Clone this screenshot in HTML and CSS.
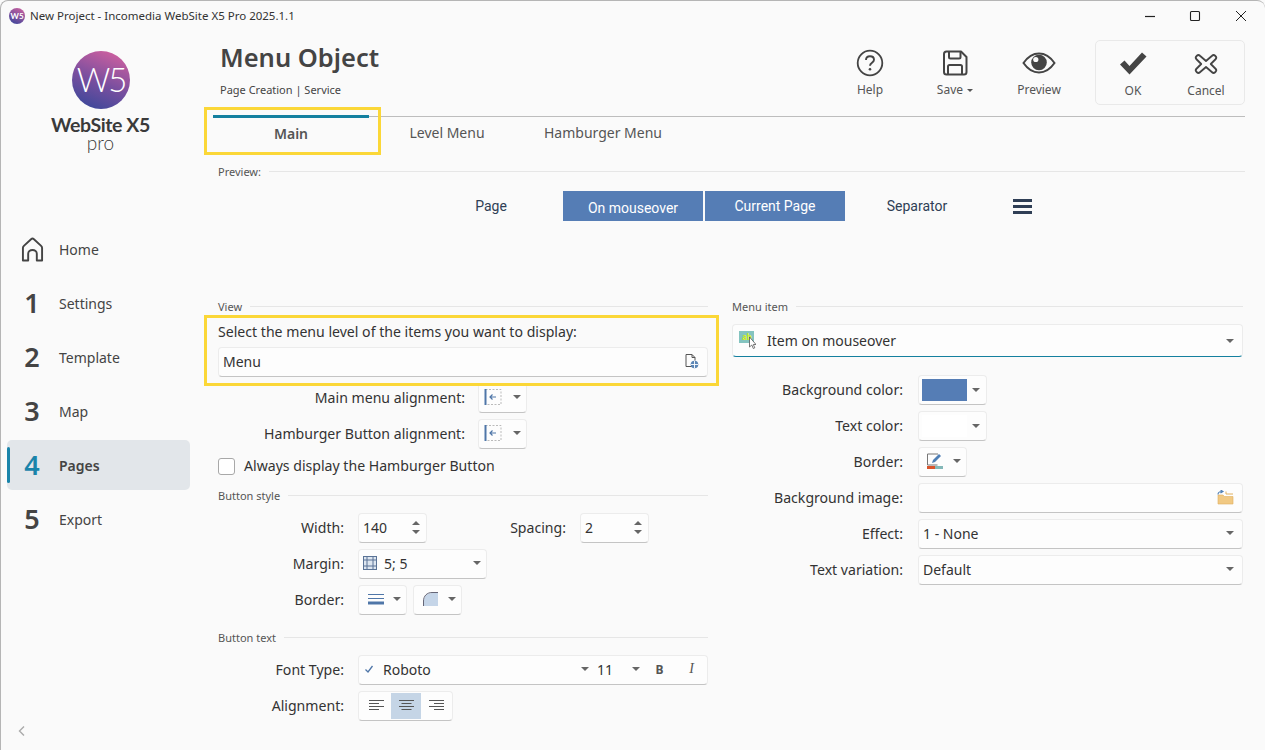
FILE: index.html
```html
<!DOCTYPE html>
<html lang="en">
<head>
<meta charset="utf-8">
<title>Menu Object</title>
<link rel="stylesheet" href="styles.css">
</head>
<body>
<div class="window">
  <header class="titlebar">
    <svg class="app-icon" viewBox="0 0 16 16"><defs><linearGradient id="g1" x1="0.8" y1="0" x2="0.3" y2="1"><stop offset="0" stop-color="#c9609f"/><stop offset="1" stop-color="#43479c"/></linearGradient></defs><circle cx="8" cy="8" r="8" fill="url(#g1)"/><text x="8" y="11.3" text-anchor="middle" class="app-icon-text">W5</text></svg>
    <span class="title-text">New Project - Incomedia WebSite X5 Pro 2025.1.1</span>
    <div class="win-btns">
      <span class="win-btn"><svg width="12" height="12" viewBox="0 0 12 12"><path d="M1 6.5h10" stroke="#222" stroke-width="1.2"/></svg></span>
      <span class="win-btn"><svg width="12" height="12" viewBox="0 0 12 12"><rect x="1.5" y="1.5" width="9" height="9" rx="1" fill="none" stroke="#222" stroke-width="1.1"/></svg></span>
      <span class="win-btn win-close"><svg width="12" height="12" viewBox="0 0 12 12"><path d="M1 1l10 10M11 1L1 11" stroke="#222" stroke-width="1"/></svg></span>
    </div>
  </header>
  <div class="shell">
    <aside class="sidebar">
      <div class="logo">
        <svg class="logo-mark" viewBox="0 0 58 58"><defs><linearGradient id="g2" x1="0.75" y1="0" x2="0.35" y2="1"><stop offset="0" stop-color="#d0609f"/><stop offset="0.55" stop-color="#7a4f9f"/><stop offset="1" stop-color="#40489a"/></linearGradient></defs><circle cx="29" cy="29" r="29" fill="url(#g2)"/><text x="29" y="41" text-anchor="middle" class="logo-mark-text">W5</text></svg>
        <div class="logo-name">WebSite X5</div>
        <div class="logo-sub">pro</div>
      </div>
      <nav class="nav">
        <a class="nav-item"><span class="nav-num"><svg width="23" height="25" viewBox="0 0 24 26"><path d="M2 24.5V11.5C2 10.5 2.4 9.8 3 9.2L10.5 2.3c.9-.8 2.1-.8 3 0L21 9.2c.6.6 1 1.3 1 2.3v13h-5.5v-7c0-2.4-2-4-4.500-4s-4.500 1.600-4.500 4v7z" fill="none" stroke="#444" stroke-width="2" stroke-linejoin="round"/></svg></span><span>Home</span></a>
        <a class="nav-item"><span class="nav-num">1</span><span>Settings</span></a>
        <a class="nav-item"><span class="nav-num">2</span><span>Template</span></a>
        <a class="nav-item"><span class="nav-num">3</span><span>Map</span></a>
        <a class="nav-item active"><span class="nav-num">4</span><span>Pages</span></a>
        <a class="nav-item"><span class="nav-num">5</span><span>Export</span></a>
      </nav>
      <div class="collapse"><svg width="8" height="12" viewBox="0 0 8 12"><path d="M6 1.500L1.500 6 6 10.500" fill="none" stroke="#aaa" stroke-width="1.400"/></svg></div>
    </aside>
    <main class="main">
      <div class="head">
        <div class="head-title">
          <h1>Menu Object</h1>
          <p>Page Creation | Service</p>
        </div>
        <div class="tools">
          <div class="tool tool-help">
            <svg width="30" height="30" viewBox="0 0 30 30"><circle cx="15" cy="15" r="12.300" fill="none" stroke="#444" stroke-width="1.800"/><path d="M11 12c0-2.400 1.800-3.800 4-3.800s4 1.400 4 3.500c0 3-4 3-4 6" fill="none" stroke="#444" stroke-width="1.900"/><circle cx="15" cy="21.300" r="1.300" fill="#444"/></svg>
            <span>Help</span>
          </div>
          <div class="tool">
            <svg width="30" height="30" viewBox="0 0 30 30"><path d="M6.500 3.500h14.500l5.500 5.500v15c0 1.500-1 2.500-2.500 2.500h-17.500c-1.500 0-2.500-1-2.500-2.500v-18c0-1.500 1-2.500 2.500-2.500z" fill="none" stroke="#444" stroke-width="2" stroke-linejoin="round"/><path d="M9 3.500v5.500c0 1 .5 1.500 1.500 1.500h8.500c1 0 1.500-.5 1.500-1.500V3.500M8 26.500v-8c0-1 .5-1.500 1.500-1.500h11c1 0 1.500.5 1.500 1.500v8" fill="none" stroke="#444" stroke-width="2"/></svg>
            <span>Save <i class="caret small"></i></span>
          </div>
          <div class="tool">
            <svg width="34" height="30" viewBox="0 0 34 30"><path d="M1.500 15C6 8.500 11 5.500 17 5.500S28 8.500 32.500 15C28 21.500 23 24.500 17 24.500S6 21.500 1.500 15z" fill="none" stroke="#444" stroke-width="2"/><circle cx="17" cy="14.500" r="7.800" fill="#444"/><circle cx="13.800" cy="11.500" r="2.600" fill="#fafafa"/></svg>
            <span>Preview</span>
          </div>
          <div class="tool-box">
            <div class="tool wide">
              <svg width="30" height="30" viewBox="0 0 30 30"><path d="M2 15.500l4.500-4 5 5.500L24 3.500l4.500 4L11.500 25.500z" fill="#444"/></svg>
              <span>OK</span>
            </div>
            <div class="tool wide">
              <svg width="26" height="30" viewBox="0 0 30 30"><path d="M8 5.500c-1-1-2.500-1-3.500 0l-.5.500c-1 1-1 2.500 0 3.500l5.500 5.500-5.500 5.500c-1 1-1 2.500 0 3.500l.5.500c1 1 2.500 1 3.500 0l7-6 7 6c1 1 2.500 1 3.500 0l.5-.5c1-1 1-2.500 0-3.500L20.500 15 26 9.500c1-1 1-2.500 0-3.500l-.5-.5c-1-1-2.500-1-3.500 0l-7 6z" fill="none" stroke="#444" stroke-width="2.100" stroke-linejoin="round"/></svg>
              <span>Cancel</span>
            </div>
          </div>
        </div>
      </div>

      <div class="tabs">
        <div class="tab active">Main</div>
        <div class="tab">Level Menu</div>
        <div class="tab">Hamburger Menu</div>
      </div>

      <div class="section-title preview-title"><span>Preview:</span></div>
      <div class="preview">
        <div class="pv-item">Page</div>
        <div class="pv-item filled low">On mouseover</div>
        <div class="pv-item filled">Current Page</div>
        <div class="pv-item">Separator</div>
        <div class="pv-burger"><i></i><i></i><i></i></div>
      </div>

      <div class="columns">
        <section class="col">
          <div class="section-title"><span>View</span></div>
          <div class="marked">
            <div class="select-label">Select the menu level of the items you want to display:</div>
            <div class="ctl input-full">
              <span>Menu</span>
              <svg class="end-icon" width="16" height="16" viewBox="0 0 16 16"><path d="M9.500 13.500H3V1.500h6l3 3v3" fill="none" stroke="#555" stroke-width="1"/><path d="M9 1.500v3h3" fill="none" stroke="#555" stroke-width="1"/><circle cx="11.500" cy="11.500" r="3.800" fill="#5a85b5"/><path d="M8 11.500h7M11.500 8v7" stroke="#fff" stroke-width=".9"/></svg>
            </div>
          </div>
          <div class="row"><label class="lbl lbl-long">Main menu alignment:</label>
            <div class="ctl split">
              <svg width="18" height="18" viewBox="0 0 18 18"><rect x="1.500" y="1.500" width="15.500" height="15" fill="none" stroke="#bbb" stroke-dasharray="2 1.500"/><path d="M1.500 1v16" stroke="#4f76a8" stroke-width="2"/><path d="M12 9H6M8.500 6.500L6 9l2.500 2.500" fill="none" stroke="#4f76a8" stroke-width="1.200"/></svg>
              <i class="caret"></i>
            </div>
          </div>
          <div class="row"><label class="lbl lbl-long">Hamburger Button alignment:</label>
            <div class="ctl split">
              <svg width="18" height="18" viewBox="0 0 18 18"><rect x="1.500" y="1.500" width="15.500" height="15" fill="none" stroke="#bbb" stroke-dasharray="2 1.500"/><path d="M1.500 1v16" stroke="#4f76a8" stroke-width="2"/><path d="M12 9H6M8.500 6.500L6 9l2.500 2.500" fill="none" stroke="#4f76a8" stroke-width="1.200"/></svg>
              <i class="caret"></i>
            </div>
          </div>
          <div class="check-row"><span class="check"></span><span class="check-text">Always display the Hamburger Button</span></div>

          <div class="section-title style-title"><span>Button style</span></div>
          <div class="row first"><label class="lbl">Width:</label>
            <div class="ctl spin"><span>140</span><span class="spin-btns"><i class="up"></i><i class="down"></i></span></div>
            <label class="lbl lbl-spacing">Spacing:</label>
            <div class="ctl spin"><span>2</span><span class="spin-btns"><i class="up"></i><i class="down"></i></span></div>
          </div>
          <div class="row"><label class="lbl">Margin:</label>
            <div class="ctl margin-ctl">
              <svg width="14" height="14" viewBox="0 0 14 14"><rect x=".5" y=".5" width="13" height="13" fill="#dde6f0" stroke="#5a7396"/><path d="M.5 4h13M.5 10h13M4 .5v13M10 .5v13" stroke="#5a7396"/></svg>
              <span>5; 5</span><i class="caret push"></i>
            </div>
          </div>
          <div class="row"><label class="lbl">Border:</label>
            <div class="ctl split border-a">
              <svg width="16" height="12" viewBox="0 0 16 12"><path d="M0 1.500h16M0 5.500h16" stroke="#4f76a8"/><path d="M0 10h16" stroke="#4f76a8" stroke-width="3"/></svg>
              <i class="caret"></i>
            </div>
            <div class="ctl split border-b">
              <svg width="16" height="14" viewBox="0 0 16 14"><path d="M1 14V9c0-5 3-8 8-8h6v13z" fill="#c5d5e8"/><path d="M.5 14V9C.5 4 4 .5 9 .5h6" fill="none" stroke="#667"/></svg>
              <i class="caret"></i>
            </div>
          </div>

          <div class="section-title text-title"><span>Button text</span></div>
          <div class="row first"><label class="lbl">Font Type:</label>
            <div class="ctl font-ctl">
              <svg class="font-check" width="10" height="10" viewBox="0 0 10 10"><path d="M1.500 5.500l2.500 2.500 4.500-6" fill="none" stroke="#4f76a8" stroke-width="1.300"/></svg>
              <span class="font-name">Roboto</span>
              <i class="caret"></i>
              <span class="font-size">11</span>
              <i class="caret"></i>
              <b class="fmt fmt-b">B</b>
              <em class="fmt fmt-i">I</em>
            </div>
          </div>
          <div class="row"><label class="lbl">Alignment:</label>
            <div class="ctl align-ctl">
              <span class="seg"><svg width="15" height="11" viewBox="0 0 15 11"><path d="M0 .5h15M0 3.500h10M0 6.500h15M0 9.500h10" stroke="#555"/></svg></span>
              <span class="seg on"><svg width="15" height="11" viewBox="0 0 15 11"><path d="M0 .5h15M2.500 3.500h10M0 6.500h15M2.500 9.500h10" stroke="#555"/></svg></span>
              <span class="seg"><svg width="15" height="11" viewBox="0 0 15 11"><path d="M0 .5h15M5 3.500h10M0 6.500h15M5 9.500h10" stroke="#555"/></svg></span>
            </div>
          </div>
        </section>

        <section class="col">
          <div class="section-title"><span>Menu item</span></div>
          <div class="ctl item-select">
            <svg width="17" height="19" viewBox="0 0 17 19"><rect x="0" y="0" width="15" height="12" fill="#84c4c0"/><text x="3" y="9" class="item-icon-text">ab</text><path d="M10.500 6v10l2.300-2 1.500 3.500 1.500-.7-1.500-3.300h2.700z" fill="#fff" stroke="#555" stroke-width=".8"/></svg>
            <span>Item on mouseover</span><i class="caret push"></i>
          </div>
          <div class="row first-right"><label class="lbl lbl-right">Background color:</label>
            <div class="ctl color-ctl"><span class="swatch"></span><i class="caret"></i></div>
          </div>
          <div class="row"><label class="lbl lbl-right">Text color:</label>
            <div class="ctl color-ctl"><span class="swatch white"></span><i class="caret"></i></div>
          </div>
          <div class="row"><label class="lbl lbl-right">Border:</label>
            <div class="ctl split border-c">
              <svg width="16" height="17" viewBox="0 0 16 17"><path d="M11 1H.5v11h10" fill="none" stroke="#777"/><path d="M5 10l1-3 6-6 2 2-6 6z" fill="#4f7fb5"/><rect x="0" y="13" width="8" height="3" fill="#d9542b"/><rect x="8" y="13" width="8" height="3" fill="#84b8b8"/></svg>
              <i class="caret"></i>
            </div>
          </div>
          <div class="row"><label class="lbl lbl-right">Background image:</label>
            <div class="ctl grow">
              <svg class="end-icon" width="17" height="15" viewBox="0 0 17 15"><path d="M1 14V5h5l1.500 1.500H16V14z" fill="#f1c983" stroke="#e0b060" stroke-width=".6"/><path d="M16 4H9V1.500" fill="none" stroke="#e0b060"/><path d="M1 4.500c0-2 1.500-3 4-3M3.500 0L6 1.500 3.500 3" fill="none" stroke="#4f7fb5" stroke-width="1.100"/></svg>
            </div>
          </div>
          <div class="row"><label class="lbl lbl-right">Effect:</label>
            <div class="ctl grow"><span>1 - None</span><i class="caret push"></i></div>
          </div>
          <div class="row"><label class="lbl lbl-right">Text variation:</label>
            <div class="ctl grow"><span>Default</span><i class="caret push"></i></div>
          </div>
        </section>
      </div>
    </main>
  </div>
</div>
</body>
</html>
```

FILE: styles.css
```css
*, *::before, *::after { box-sizing: border-box; }
html, body { margin: 0; padding: 0; }
body {
  width: 1265px;
  height: 750px;
  overflow: hidden;
  background: #fafafa;
  font-family: "Noto Sans", "Open Sans", sans-serif;
  font-size: 14.1px;
  color: #333;
}
.window {
  width: 1265px;
  height: 750px;
  display: grid;
  grid-template-rows: 29px 1fr;
  background: #fafafa;
  border-left: 1px solid #b5b5b5;
  border-top: 1px solid #b5b5b5;
  border-top-right-radius: 8px;
  border-top-left-radius: 8px;
}
.titlebar {
  display: flex;
  align-items: center;
  padding: 0 0 0 8px;
}
.app-icon { width: 16px; height: 16px; }
.app-icon-text { font: 700 8px "Lato", sans-serif; fill: #fff; }
.title-text { margin-left: 5px; font-size: 11.500px; color: #333; }
.win-btns { margin-left: auto; display: flex; margin-right: 1px; }
.win-btn { width: 45px; height: 30px; display: flex; align-items: center; justify-content: center; }
.win-close { width: 47px; }

.shell { display: grid; grid-template-columns: 203px 1fr; min-height: 0; }

.sidebar { display: flex; flex-direction: column; padding: 21px 0 0 6px; }
.logo { width: 184px; height: 173px; display: flex; flex-direction: column; align-items: center; }
.logo-mark { width: 58px; height: 58px; flex: none; margin-left: 3px; }
.logo-mark-text { font: 300 33px "Lato", sans-serif; fill: #fff; letter-spacing: -2px; }
.logo-name { margin-top: 6px; margin-left: 3px; font: 700 19.500px/20px "Lato", sans-serif; color: #3a3a3a; letter-spacing: -0.400px; white-space: nowrap; }
.logo-sub { margin-left: 3px; font: 300 19px/15px "Lato", sans-serif; color: #3a3a3a; }

.nav { display: flex; flex-direction: column; gap: 4px; }
.nav-item { height: 50px; width: 183px; display: flex; align-items: center; border-radius: 5px; color: #444; font-size: 14px; position: relative; }
.nav-num { width: 52px; padding-right: 2px; text-align: center; font-size: 27px; font-weight: 600; color: #444; display: flex; justify-content: center; line-height: 30px; }
.nav-item.active { background: #e2e6ea; font-weight: 600; }
.nav-item.active .nav-num { color: #1a84aa; }
.nav-item.active::before { content: ""; position: absolute; left: 0; top: 7px; width: 3px; height: 36px; background: #1a84aa; border-radius: 2px; }
.collapse { margin-top: auto; padding: 0 0 13px 11px; line-height: 0; }

.main { padding-right: 20px; min-width: 0; }
.head { height: 77px; display: flex; justify-content: space-between; }
.head-title { padding: 9px 0 0 16px; }
.head-title h1 { margin: 0; font-size: 25.500px; line-height: 36px; font-weight: 600; color: #444; }
.head-title p { margin: 7px 0 0; font-size: 11px; line-height: 16px; color: #444; }
.tools { display: flex; padding-top: 10px; }
.tool { width: 84px; height: 65px; display: flex; flex-direction: column; align-items: center; padding-top: 8px; font-size: 12px; color: #555; }
.tool svg { flex: none; }
.tool span { margin-top: 4px; line-height: 16px; }
.tool.wide { width: 74px; }
.tool.wide + .tool.wide { margin-left: -1px; }
.tool-help { margin-right: 1px; }
.tool-box { width: 150px; height: 65px; margin-left: 14px; display: flex; border: 1px solid #e9e9e9; border-radius: 5px; }

.tabs { margin: 9px 0 0 9px; border-top: 1px solid #bdbdbd; display: flex; height: 39px; position: relative; }
.tab { width: 156px; height: 31px; display: flex; align-items: center; justify-content: center; font-size: 14px; color: #555; }
.tab.active { font-weight: 600; border-top: 3px solid #14809f; margin-top: -2px; height: 33px; position: relative; }
.tab.active::after { content: ""; position: absolute; left: -9px; top: -11px; width: 177px; height: 48px; border: 3px solid #fbd737; }

.section-title { display: flex; align-items: center; gap: 8px; height: 14px; font-size: 11px; color: #555; }
.section-title span { padding-bottom: 2px; }
.section-title::after { content: ""; flex: 1; height: 1px; background: #e6e6e6; margin-top: -1px; }
.preview-title { margin: 10px 0 0 14px; }

.preview { display: flex; margin: 12px 0 0 217px; height: 30px; font-family: "Roboto", sans-serif; font-size: 14px; color: #2f3e55; }
.pv-item { width: 140px; display: flex; align-items: center; justify-content: center; margin-right: 2px; }
.pv-item.filled { background: #557db5; color: #fff; }
.pv-item.low { padding-top: 4px; }
.pv-burger { margin: 8px 0 0 24px; width: 19px; display: flex; flex-direction: column; gap: 3px; }
.pv-burger i { display: block; height: 3px; background: #2f3e55; }

.columns { display: grid; grid-template-columns: 490px 511px; column-gap: 24px; margin: 79px 0 0 14px; }
.col { min-width: 0; }

.marked { position: relative; padding-top: 8px; }
.marked::after { content: ""; position: absolute; left: -14px; right: -11px; top: 1px; height: 71px; border: 3px solid #fbd737; z-index: 2; pointer-events: none; }
.select-label { height: 20px; line-height: 20px; margin-bottom: 5px; }

.ctl {
  height: 30px;
  display: flex;
  align-items: center;
  padding-bottom: 2px;
  background: #fdfdfd;
  border: 1px solid #ececec;
  border-bottom-color: #c4c4c4;
  border-radius: 4px;
  font-size: 14px;
}
.input-full { padding: 0 8px 2px 4px; }
.end-icon { margin-left: auto; flex: none; }

.row { display: flex; align-items: center; height: 30px; margin-top: 6px; }
.row.first { margin-top: 10px; }
.lbl { flex: none; width: 126px; margin-right: 14px; padding-bottom: 2px; text-align: right; white-space: nowrap; }
.lbl-long { width: 247px; margin-right: 13px; }
.lbl-spacing { width: 139px; margin-right: 14px; }
.lbl-right { width: 171px; margin-right: 15px; }

.caret { display: inline-block; width: 0; height: 0; border: 4px solid transparent; border-top: 4px solid #666; border-bottom: 0; flex: none; }
.caret.small { border-width: 3px; border-top-color: #555; border-bottom: 0; vertical-align: middle; margin-left: 1px; }
.caret.push { margin-left: auto; }

.split { width: 49px; padding: 0 5px 2px 5px; justify-content: space-between; }
.check-row { display: flex; align-items: center; height: 20px; margin-top: 7px; gap: 9px; }
.check-text { padding-bottom: 2px; }
.check { width: 17px; height: 17px; background: #fff; border: 1px solid #a8a8a8; border-radius: 3px; }
.style-title { margin-top: 13px; }
.text-title { margin-top: 16px; }

.spin { width: 69px; padding: 0 4px 2px 4px; justify-content: space-between; }
.spin-btns { display: flex; flex-direction: column; gap: 5px; padding-right: 2px; }
.spin-btns i { display: block; width: 0; height: 0; border-left: 4px solid transparent; border-right: 4px solid transparent; }
.spin-btns .up { border-bottom: 4px solid #666; }
.spin-btns .down { border-top: 4px solid #666; }

.margin-ctl { width: 129px; padding: 0 5px 2px 4px; gap: 7px; }
.border-a { margin-right: 6px; padding-left: 9px; }
.border-b { padding-left: 9px; }
.font-ctl { flex: 1; padding: 0 0 2px 5px; }
.font-check { margin-right: 9px; }
.font-name { width: 198px; }
.font-size { width: 35px; margin-left: 8px; }
.fmt { width: 31px; text-align: center; font-size: 12px; color: #555; font-family: "Liberation Serif", serif; }
.fmt-b { font-family: "Noto Sans", sans-serif; margin-left: 4px; }
.fmt-i { font-size: 14px; margin-left: 1px; }
.align-ctl { width: 95px; padding: 0 0 0 2px; justify-content: flex-start; }
.seg { width: 30px; height: 26px; display: flex; align-items: center; justify-content: center; margin-top: -1px; }
.seg.on { background: #c5d5e6; }

.item-select { margin-top: 10px; height: 33px; border-bottom: 1px solid #14809f; padding: 0 8px 0 6px; gap: 11px; }
.item-icon-text { font: 700 8px "Noto Sans", sans-serif; fill: #d8f020; }
.row.first-right { margin-top: 18px; }
.color-ctl { width: 69px; padding: 0 6px 0 3px; justify-content: space-between; }
.swatch { width: 45px; height: 22px; background: #557db5; }
.swatch.white { background: #fff; }
.border-c { padding: 0 5px 2px 8px; }
.grow { flex: 1; padding: 0 8px 2px 4px; }
```
